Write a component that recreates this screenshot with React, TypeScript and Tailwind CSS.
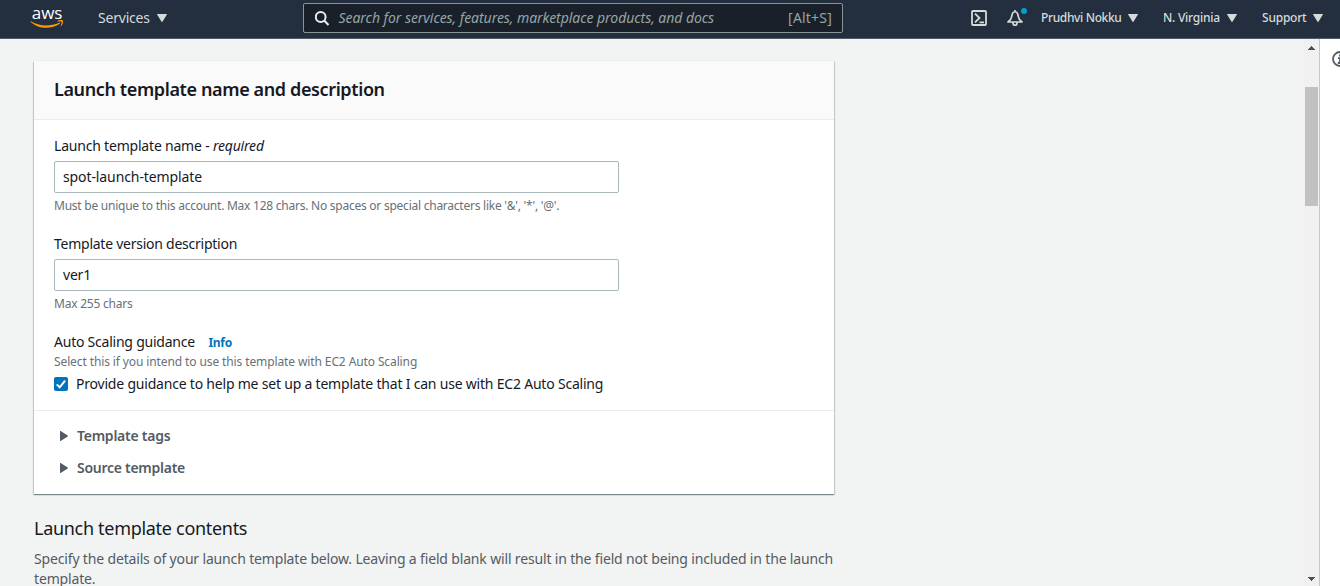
import type { ReactNode } from "react";

function Caret() {
  return (
    <svg viewBox="0 0 10 8" className="h-2 w-2.5 shrink-0">
      <path d="M.4 0h9.2c.4 0 .5.3.3.6L5.6 7.6a.7.7 0 0 1-1.2 0L.1.6C-.1.3 0 0 .4 0z" fill="#d5dbdb" />
    </svg>
  );
}

function AwsLogo() {
  return (
    <div className="flex h-[22px] w-[34px] flex-col items-center">
      <span className="h-[13px] font-['Open_Sans'] text-[17px] leading-[11px] font-medium tracking-[-0.1px] text-white">
        aws
      </span>
      <svg viewBox="0 0 34 8" className="h-2 w-[34px]" fill="#ff9900">
        <path d="M.7 1.2C5 3.8 10.4 5.5 16 5.5c4.4 0 9-.9 13.2-2.7.7-.3 1.2.4.6.9C26 6.5 20.9 7.800 16.2 7.800 10 7.800 4.400 5.500.3 1.700c-.3-.3 0-.7.4-.5z" />
        <path d="M27.4.9c1.500-1.100 4.200-.9 5.500-.4.6.3.1 3.900-1.800 5.600-.3.3-.6.1-.5-.2.5-1.200 1.400-3.500 1-4.100-.4-.5-2.700-.3-3.900-.2-.4 0-.6-.4-.3-.7z" />
      </svg>
    </div>
  );
}

function Field({ label, value, hint }: { label: ReactNode; value: ReactNode; hint: ReactNode }) {
  return (
    <div className="flex flex-col">
      <div className="h-5 text-sm leading-5">{label}</div>
      <div className="mt-[5px] flex h-8 w-[565px] items-center rounded-[2px] border border-[#aab7b8] bg-white px-2 text-sm">
        {value}
      </div>
      <div className="mt-1 h-4 text-xs leading-[17px] text-[#687078]">{hint}</div>
    </div>
  );
}

function Expander({ children }: { children: ReactNode }) {
  return (
    <div className="flex h-8 items-center gap-[9px] text-sm font-semibold text-[#545b64]">
      <svg viewBox="0 0 8 10" className="h-2.5 w-2" fill="#545b64">
        <path d="M0 .4C0 0 .3-.1.6.1l7.1 4.400c.4.300.4.700 0 1L.6 9.900c-.3.200-.6.100-.6-.3z" />
      </svg>
      {children}
    </div>
  );
}

function Header() {
  return (
    <header className="flex h-[39px] shrink-0 border-b border-[#545b64] bg-[#232f3e] text-[#d5dbdb]">
      <div className="flex w-[303px] pt-[7px] pl-[30px]">
        <AwsLogo />
        <div className="ml-[34px] flex h-[22px] items-center gap-2 text-sm">
          <span className="w-[51px] tracking-[-0.2px]">Services</span>
          <Caret />
        </div>
      </div>
      <div className="mt-[3px] flex h-[30px] w-[540px] items-center rounded-[2px] border border-[#879596] bg-[#1a202a] pr-2.5 pl-[11px] text-sm text-[#95a5a6]">
        <svg viewBox="0 0 15 15" className="size-[15px]" fill="none" stroke="#eaeded" strokeWidth="2">
          <circle cx="5.700" cy="6" r="4.900" />
          <path d="M9.200 9.500l4.300 4.500" />
        </svg>
        <span className="ml-[8.5px] tracking-[-0.05px] italic">
          Search for services, features, marketplace products, and docs
        </span>
        <span className="ml-auto tracking-[0.2px]">[Alt+S]</span>
      </div>
      <div className="flex h-9 items-center pl-32 text-xs font-medium">
        <svg viewBox="0 0 16 16" className="size-4" fill="none" stroke="#d5dbdb" strokeWidth="1.8">
          <rect x="1" y="1" width="14" height="14" rx="1" />
          <path d="M4 3.600l4.500 4.400L4 12.400M8.500 12.400h4.500" />
        </svg>
        <div className="relative ml-5 size-[18px]">
          <svg viewBox="0 0 18 18" className="size-[18px]" fill="none" stroke="#d5dbdb" strokeWidth="1.700" strokeLinejoin="round">
            <path d="M8 2.500C5.600 3.100 5 5 4.700 7.500 4.500 9.500 3.200 11.300 1 13h14C12.800 11.300 11.500 9.500 11.300 7.500 11 5 10.400 3.100 8 2.500zM5.900 13.400c0 3.800 4.200 3.800 4.200 0M8 .9v1.600" />
          </svg>
          <span className="absolute top-[-1px] left-3.5 size-1.5 rounded-full bg-[#00a1c9]" />
        </div>
        <span className="ml-4 w-20 whitespace-nowrap tracking-[-0.36px]">Prudhvi Nokku</span>
        <span className="ml-[7px] flex"><Caret /></span>
        <span className="ml-[25px] w-[57px] whitespace-nowrap tracking-[-0.25px]">N. Virginia</span>
        <span className="ml-[7px] flex"><Caret /></span>
        <span className="ml-[25px] w-11 tracking-[-0.22px]">Support</span>
        <span className="ml-[7px] flex"><Caret /></span>
      </div>
    </header>
  );
}

export default function App() {
  return (
    <div className="flex h-[586px] w-[1340px] flex-col overflow-hidden bg-[#f2f3f3] font-['Noto_Sans',sans-serif] text-[#16191f]">
      <Header />
      <div className="flex min-h-0 flex-1">
        <main className="w-[1304px] shrink-0 overflow-hidden pt-[22px] pl-[34px]">
          <section className="h-[433px] w-[800px] bg-white shadow-[0_1px_1px_0_rgba(0,28,36,0.3),1px_1px_1px_0_rgba(0,28,36,0.15),-1px_1px_1px_0_rgba(0,28,36,0.15),0_-1px_0_0_#eaeded]">
            <h2 className="flex h-[59px] items-center border-b border-[#eaeded] bg-[#fafafa] px-5 pb-0.5 text-lg font-semibold tracking-[-0.38px]">
              Launch template name and description
            </h2>
            <div className="flex h-[291px] flex-col border-b border-[#eaeded] px-5 pt-4">
              <Field
                label={
                  <span className="tracking-[-0.2px]">
                    Launch template name - <em>required</em>
                  </span>
                }
                value={<span className="tracking-[-0.1px]">spot-launch-template</span>}
                hint={
                  <span className="tracking-[-0.245px]">
                    Must be unique to this account. Max 128 chars. No spaces or special characters like '&amp;', '*', '@'.
                  </span>
                }
              />
              <div className="mt-[21px]">
                <Field
                  label={<span className="tracking-[-0.25px]">Template version description</span>}
                  value={<span className="tracking-[-0.2px]">ver1</span>}
                  hint={<span className="tracking-[-0.22px]">Max 255 chars</span>}
                />
              </div>
              <div className="mt-[21px] flex h-5 items-center text-sm">
                <span className="w-[154.5px] tracking-[-0.23px]">Auto Scaling guidance</span>
                <a className="mt-px text-xs font-bold tracking-[-0.3px] text-[#0073bb]">Info</a>
              </div>
              <div className="h-4 text-xs leading-[19px] tracking-[-0.11px] text-[#687078]">
                Select this if you intend to use this template with EC2 Auto Scaling
              </div>
              <div className="mt-1 flex h-6 items-center gap-2 text-sm">
                <svg viewBox="0 0 14 14" className="size-3.5">
                  <rect width="14" height="14" rx="2" fill="#0073bb" />
                  <path d="M2.800 7.400l2.900 2.900 5.400-6.700" fill="none" stroke="#fff" strokeWidth="2" />
                </svg>
                <span className="tracking-[-0.205px]">
                  Provide guidance to help me set up a template that I can use with EC2 Auto Scaling
                </span>
              </div>
            </div>
            <div className="flex flex-col pt-[9px] pl-[26px]">
              <Expander><span className="tracking-[-0.25px]">Template tags</span></Expander>
              <Expander><span className="tracking-[-0.27px]">Source template</span></Expander>
            </div>
          </section>
          <h2 className="mt-[22px] h-6 text-lg leading-6 tracking-[-0.3px]">Launch template contents</h2>
          <p className="mt-[9px] w-[804px] text-sm leading-5 tracking-[-0.16px] text-[#545b64]">
            Specify the details of your launch template below. Leaving a field blank will result in the field not being included in the launch template.
          </p>
        </main>
        <div className="flex w-[15px] shrink-0 flex-col items-center bg-[#f1f1f1] pr-px">
          <svg viewBox="0 0 7 4" className="mt-[7px] h-1 w-[7px]" fill="#505050" shapeRendering="crispEdges">
            <path d="M3 0h1v1h1v1h1v1h1v1H0V3h1V2h1V1h1z" />
          </svg>
          <div className="mt-[37px] h-[119px] w-[13px] bg-[#c1c1c1]" />
          <svg viewBox="0 0 7 4" className="mt-auto mb-[5px] h-1 w-[7px]" fill="#505050" shapeRendering="crispEdges">
            <path d="M0 0h7v1H6v1H5v1H4v1H3V3H2V2H1V1H0z" />
          </svg>
        </div>
        <aside className="flex w-[21px] shrink-0 overflow-hidden border-l border-[#c4c8c8] bg-white pt-3 pl-3">
          <svg viewBox="0 0 16 16" className="size-4 shrink-0" fill="none" stroke="#545b64" strokeWidth="1.800">
            <circle cx="8" cy="8" r="7" />
            <path d="M8 3.500v2M6 7.200h2v4.600M5.800 12h4.400" />
          </svg>
        </aside>
      </div>
    </div>
  );
}
